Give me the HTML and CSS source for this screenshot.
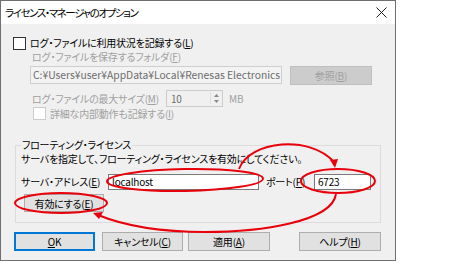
FILE: index.html
```html
<!DOCTYPE html>
<html lang="ja">
<head>
<meta charset="utf-8">
<link rel="stylesheet" href="styles.css">
</head>
<body>
<div class="dialog">
  <div class="titlebar">
    <span class="title">ライセンス・マネージャのオプション</span>
    <svg class="close" width="11" height="11" viewBox="0 0 11 11"><path d="M0.5 0.5 L10.5 10.5 M10.5 0.5 L0.5 10.5" stroke="#1a1a1a" stroke-width="1" fill="none"/></svg>
  </div>
  <div class="body">
    <div class="row r1"><span class="cb"></span><span class="lbl">ログ・ファイルに利用状況を記録する(<u>L</u>)</span></div>
    <div class="row r2 dis">ログ・ファイルを保存するフォルダ(<u>F</u>)</div>
    <div class="row r3">
      <div class="pathbox">C:¥Users¥user¥AppData¥Local¥Renesas Electronics</div>
      <div class="btn disbtn">参照(<u>B</u>)</div>
    </div>
    <div class="row r4">
      <span class="dis sizelbl">ログ・ファイルの最大サイズ(<u>M</u>)</span>
      <div class="spin"><span class="spinval">10</span>
        <span class="arrows"><svg width="7" height="11" viewBox="0 0 7 11"><path d="M3.5 1 L6 4 L1 4 Z M1 7 L6 7 L3.5 10 Z" fill="#8a8a8a"/></svg></span>
      </div>
      <span class="dis mb">MB</span>
    </div>
    <div class="row r5 dis"><span class="cb cbdis"></span><span class="lbl2">詳細な内部動作も記録する(<u>I</u>)</span></div>
    <fieldset class="group">
      <legend>フローティング・ライセンス</legend>
      <div class="desc">サーバを指定して、フローティング・ライセンスを有効にしてください。</div>
      <div class="row srv">
        <span class="srvlbl">サーバ・アドレス(<u>E</u>)</span>
        <div class="tb host">localhost</div>
        <span class="portlbl">ポート(<u>P</u>)</span>
        <div class="tb port">6723</div>
      </div>
      <div class="btn enable">有効にする(<u>E</u>)</div>
    </fieldset>
    <div class="row buttons">
      <div class="btn ok"><u>O</u>K</div>
      <div class="btn cancel">キャンセル(<u>C</u>)</div>
      <div class="btn apply">適用(<u>A</u>)</div>
      <div class="btn help">ヘルプ(<u>H</u>)</div>
    </div>
  </div>
</div>
<svg class="marks" width="452" height="266" viewBox="0 0 452 266">
  <g fill="none" stroke="#e8000b" stroke-width="2">
    <ellipse cx="185" cy="180" rx="78" ry="11" transform="rotate(-1 185 180)"/>
    <ellipse cx="338" cy="181" rx="37" ry="12"/>
    <ellipse cx="61" cy="203" rx="46" ry="10"/>
    <path d="M239 169 C250 140 310 135 334 162"/>
    <path d="M336 194 C332 222 260 232 205 232 C160 232 125 226 98 215"/>
  </g>
  <g fill="#e8000b">
    <path d="M335 168 L330 160 L338 159 Z"/>
    <path d="M93 213 L103 212 L99 219 Z"/>
  </g>
</svg>
</body>
</html>
```
FILE: styles.css
```css
html, body {
  margin: 0;
  padding: 0;
  background: #ffffff;
}
body {
  width: 452px;
  height: 266px;
  position: relative;
  overflow: hidden;
  font-family: "Noto Sans CJK JP", "Noto Sans", sans-serif;
  font-size: 10px;
  letter-spacing: -0.2px;
  font-feature-settings: "palt";
  color: #000;
  white-space: nowrap;
}
u { text-decoration: underline; text-underline-offset: 1px; }
.dialog {
  width: 396px;
  height: 261px;
  box-sizing: border-box;
  border: 1px solid #6f6f6f;
  display: flex;
  flex-direction: column;
}
.titlebar {
  height: 23px;
  flex: none;
  background: #fff;
  display: flex;
  align-items: center;
  justify-content: space-between;
  padding: 0 8px 0 4px;
  font-size: 10.5px;
  letter-spacing: -1.4px;
}
.title { line-height: 23px; }
.close { display: block; }
.body {
  flex: 1;
  background: #f0f0f0;
  padding: 12px 0 0 12px;
  display: flex;
  flex-direction: column;
}
.row { display: flex; align-items: center; }
.dis { color: #a0a0a0; }
.cb {
  width: 13px;
  height: 13px;
  box-sizing: border-box;
  border: 1px solid #333;
  background: #fff;
  flex: none;
}
.cbdis { border-color: #cccccc; background: #fff; }
.r1 { height: 14px; }
.r1 .lbl { margin-left: 4px; line-height: 14px; }
.r2 { height: 14px; padding-left: 19px; line-height: 14px; }
.r3 { height: 20px; margin-top: 1px; padding-left: 17px; }
.pathbox {
  width: 252px;
  height: 18px;
  box-sizing: border-box;
  border: 1px solid #cfcfcf;
  background: #f3f3f3;
  color: #6d6d6d;
  padding-left: 2px;
  line-height: 16px;
  font-size: 10.3px;
  letter-spacing: 0;
  overflow: hidden;
  flex: none;
}
.btn {
  box-sizing: border-box;
  border: 1px solid #adadad;
  background: #e1e1e1;
  display: flex;
  align-items: center;
  justify-content: center;
  height: 19px;
  flex: none;
}
.disbtn {
  width: 82px;
  margin-left: 8px;
  background: #cccccc;
  border-color: #bfbfbf;
  color: #a0a0a0;
}
.r4 { height: 17px; margin-top: 5px; padding-left: 19px; }
.sizelbl { width: 134px; flex: none; }
.spin {
  width: 57px;
  height: 17px;
  box-sizing: border-box;
  border: 1px solid #cccccc;
  background: #f0f0f0;
  display: flex;
  align-items: center;
  justify-content: space-between;
  padding: 0 2px 0 4px;
  color: #6d6d6d;
  flex: none;
}
.arrows { display: flex; align-items: center; border-left: 1px solid #e0e0e0; padding-left: 2px; height: 13px; }
.arrows svg { display: block; }
.mb { margin-left: 6px; }
.r5 { height: 13px; padding-left: 20px; }
.r5 .lbl2 { margin-left: 4px; line-height: 13px; }
.group {
  margin: 18px 0 0 2px;
  width: 366px;
  box-sizing: border-box;
  border: 1px solid #dcdcdc;
  padding: 0 4px 10px 5px;
  min-width: 0;
}
.group legend {
  padding: 0 1px;
  line-height: 14px;
}
.desc { line-height: 14px; }
.srv { height: 17px; margin-top: 7px; }
.srvlbl { width: 87px; flex: none; }
.tb {
  height: 16px;
  box-sizing: border-box;
  border: 1px solid #7a7a7a;
  background: #fff;
  line-height: 14px;
  padding-left: 3px;
  flex: none;
}
.host { width: 151px; }
.portlbl { margin-left: 7px; width: 48px; flex: none; }
.port { width: 57px; }
.enable {
  width: 80px;
  height: 18px;
  margin: 4px 0 0 3px;
}
.buttons { margin-top: 9px; height: 19px; align-items: stretch; }
.ok { width: 81px; margin-left: 1px; border: 1px solid #0078d7; box-shadow: inset 0 0 0 1px #0078d7; }
.cancel { width: 81px; margin-left: 7px; }
.apply { width: 82px; margin-left: 5px; }
.help { width: 82px; margin-left: 29px; }
.marks {
  position: absolute;
  left: 0;
  top: 0;
  pointer-events: none;
}
```
